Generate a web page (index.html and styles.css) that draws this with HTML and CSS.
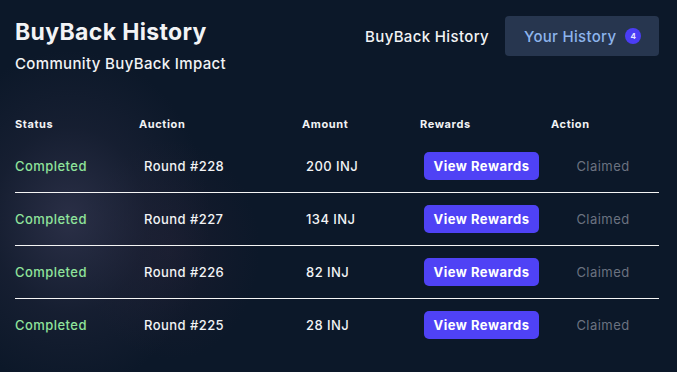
FILE: index.html
```html
<!DOCTYPE html>
<html lang="en">
<head>
<meta charset="utf-8">
<title>BuyBack History</title>
<link rel="stylesheet" href="styles.css">
</head>
<body>
<div class="page">
  <header class="top">
    <div class="titles">
      <h1 class="title">BuyBack History</h1>
      <p class="subtitle">Community BuyBack Impact</p>
    </div>
    <nav class="tabs">
      <span class="tab">BuyBack History</span>
      <button class="tab-btn">Your History <span class="badge">4</span></button>
    </nav>
  </header>

  <div class="table">
    <div class="row head">
      <div class="c c1">Status</div>
      <div class="c c2">Auction</div>
      <div class="c c3">Amount</div>
      <div class="c c4">Rewards</div>
      <div class="c c5">Action</div>
    </div>
    <div class="row body">
      <div class="c c1 status">Completed</div>
      <div class="c c2">Round #228</div>
      <div class="c c3">200 INJ</div>
      <div class="c c4"><button class="reward">View Rewards</button></div>
      <div class="c c5 claimed">Claimed</div>
    </div>
    <div class="row body">
      <div class="c c1 status">Completed</div>
      <div class="c c2">Round #227</div>
      <div class="c c3">134 INJ</div>
      <div class="c c4"><button class="reward">View Rewards</button></div>
      <div class="c c5 claimed">Claimed</div>
    </div>
    <div class="row body">
      <div class="c c1 status">Completed</div>
      <div class="c c2">Round #226</div>
      <div class="c c3">82 INJ</div>
      <div class="c c4"><button class="reward">View Rewards</button></div>
      <div class="c c5 claimed">Claimed</div>
    </div>
    <div class="row body last">
      <div class="c c1 status">Completed</div>
      <div class="c c2">Round #225</div>
      <div class="c c3">28 INJ</div>
      <div class="c c4"><button class="reward">View Rewards</button></div>
      <div class="c c5 claimed">Claimed</div>
    </div>
  </div>
</div>
</body>
</html>
```
FILE: styles.css
```css
html, body {
  margin: 0;
  padding: 0;
}
body {
  width: 677px;
  height: 372px;
  overflow: hidden;
  font-family: Inter, "Liberation Sans", sans-serif;
  color: #f2f3f5;
  background:
    radial-gradient(ellipse 140px 170px at 70px 220px, rgba(50, 53, 78, 0.8), rgba(40, 42, 64, 0.35) 55%, rgba(12, 24, 41, 0) 100%),
    radial-gradient(ellipse 90px 110px at 170px 250px, rgba(45, 35, 55, 0.35), rgba(12, 24, 41, 0) 100%),
    #0c1829;
}
.page {
  padding: 18px 18px 0 15px;
}
.top {
  display: flex;
  justify-content: space-between;
  align-items: flex-start;
}
.title {
  margin: 0;
  font-size: 23px;
  font-weight: 700;
  line-height: 28px;
  letter-spacing: 0.35px;
}
.subtitle {
  margin: 8px 0 0;
  font-size: 15px;
  font-weight: 500;
  line-height: 20px;
  letter-spacing: 0.35px;
}
.tabs {
  display: flex;
  align-items: center;
  gap: 16px;
  margin-top: -2px;
}
.tab {
  font-size: 15px;
  font-weight: 500;
  letter-spacing: 0.35px;
}
.tab-btn {
  display: flex;
  align-items: center;
  gap: 9px;
  height: 40px;
  width: 154px;
  padding: 0 0 0 19px;
  border: none;
  border-radius: 4px;
  background: #27364f;
  color: #8db4ec;
  font-family: inherit;
  font-size: 15px;
  font-weight: 500;
  letter-spacing: 0.3px;
}
.badge {
  display: inline-flex;
  align-items: center;
  justify-content: center;
  width: 16px;
  height: 16px;
  border-radius: 50%;
  background: #4b3df5;
  color: #e8e6ff;
  font-size: 8px;
  font-weight: 700;
  letter-spacing: 0;
}
.table {
  margin-top: 34px;
  width: 644px;
}
.row {
  display: grid;
  grid-template-columns: 124px 163px 118px 131px 108px;
  align-items: center;
}
.row.head {
  height: 32px;
  font-size: 11px;
  font-weight: 700;
  letter-spacing: 0.6px;
}
.row.body {
  height: 52px;
  border-bottom: 1px solid #f5f5f5;
  font-size: 13px;
  font-weight: 500;
  letter-spacing: 0.45px;
}
.row.body.last {
  border-bottom: none;
}
.row.body .c2,
.row.body .c3,
.row.body .c4 {
  padding-left: 4px;
}
.row.body .c2 {
  padding-left: 5px;
}
.status {
  color: #8fe39b;
}
.claimed {
  color: #6b7280;
  text-align: center;
  font-weight: 400;
  padding-right: 4px;
}
.reward {
  width: 115px;
  height: 28px;
  border: none;
  border-radius: 5px;
  background: #4f42f5;
  color: #ffffff;
  font-family: inherit;
  font-size: 13px;
  font-weight: 700;
  letter-spacing: 0.5px;
}
```
